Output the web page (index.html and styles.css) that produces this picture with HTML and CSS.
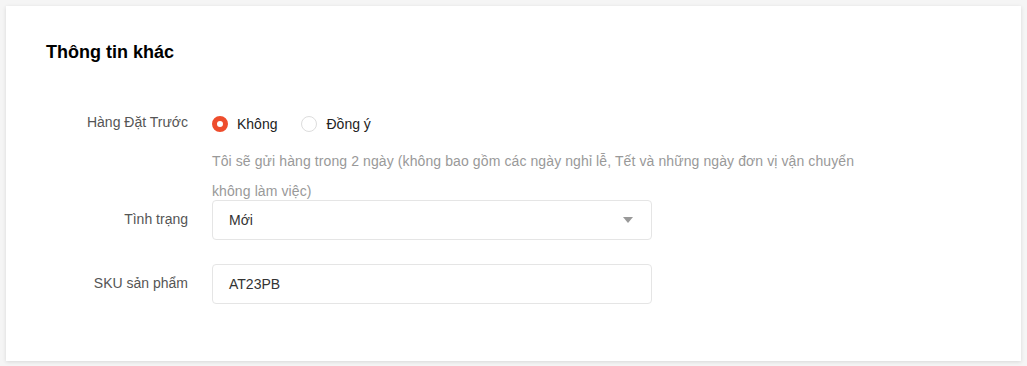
FILE: index.html
```html
<html>
<head>
    <title>Thông tin khác</title>
    <link rel="stylesheet" href="styles.css">
</head>
<body>
    <div class="card">
        <h2 class="card-title">Thông tin khác</h2>

        <div class="form-row row-preorder">
            <div class="form-label">Hàng Đặt Trước</div>
            <div class="form-field">
                <div class="radio-group">
                    <label class="radio checked"><span class="radio-dot"></span>Không</label>
                    <label class="radio"><span class="radio-dot"></span>Đồng ý</label>
                </div>
                <p class="hint">Tôi sẽ gửi hàng trong 2 ngày (không bao gồm các ngày nghỉ lễ, Tết và những ngày đơn vị vận chuyển không làm việc)</p>
            </div>
        </div>

        <div class="form-row row-status">
            <div class="form-label">Tình trạng</div>
            <div class="form-field">
                <div class="select">
                    <span>Mới</span>
                    <span class="caret"></span>
                </div>
            </div>
        </div>

        <div class="form-row">
            <div class="form-label">SKU sản phẩm</div>
            <div class="form-field">
                <div class="input">AT23PB</div>
            </div>
        </div>
    </div>
</body>
</html>
```

FILE: styles.css
```css
body {
    margin: 0;
    padding: 6px;
    background-color: #f5f5f5;
    font-family: "Liberation Sans", Arial, sans-serif;
    color: #333;
}
.card {
    background: #fff;
    box-shadow: 0 1px 4px rgba(0,0,0,0.12);
    padding: 35px 40px 57px 40px;
}
.card-title {
    margin: 0;
    font-size: 18px;
    font-weight: bold;
    color: #000;
    line-height: 22px;
}
.form-row {
    display: flex;
    align-items: flex-start;
    margin-top: 24px;
}
.row-preorder {
    margin-top: 51px;
}
.row-status {
    margin-top: -6px;
}
.form-label {
    width: 142px;
    text-align: right;
    padding-right: 24px;
    font-size: 14px;
    color: #555;
    line-height: 38px;
}
.row-preorder .form-label {
    line-height: 20px;
    margin-top: -2px;
}
.form-field {
    width: 440px;
}
.radio-group {
    display: flex;
    gap: 24px;
    height: 20px;
    align-items: center;
}
.radio {
    display: flex;
    align-items: center;
    font-size: 14px;
    color: #222;
}
.radio-dot {
    width: 16px;
    height: 16px;
    border: 1px solid #ddd;
    border-radius: 50%;
    box-sizing: border-box;
    margin-right: 9px;
}
.radio.checked .radio-dot {
    border: 5px solid #ee4d2d;
}
.hint {
    margin: 12px 0 0 0;
    width: 660px;
    font-size: 14px;
    letter-spacing: 0.1px;
    color: #999;
    line-height: 30px;
}
.select,
.input {
    height: 40px;
    box-sizing: border-box;
    border: 1px solid #e5e5e5;
    border-radius: 4px;
    padding: 0 16px;
    display: flex;
    align-items: center;
    justify-content: space-between;
    font-size: 14px;
    color: #333;
}
.caret {
    width: 0;
    height: 0;
    border-left: 5px solid transparent;
    border-right: 5px solid transparent;
    border-top: 6px solid #999;
    margin-right: 2px;
}
```
